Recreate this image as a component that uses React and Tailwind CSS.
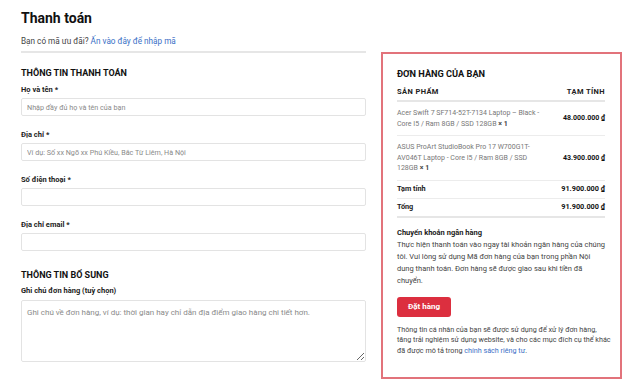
export default function App() {
  const fields = [
    { label: "Họ và tên", placeholder: "Nhập đầy đủ họ và tên của bạn" },
    { label: "Địa chỉ", placeholder: "Ví dụ: Số xx Ngõ xx Phú Kiều, Bắc Từ Liêm, Hà Nội" },
    { label: "Số điện thoại", placeholder: "" },
    { label: "Địa chỉ email", placeholder: "" },
  ];

  return (
    <div
      className="w-[624px] h-[381px] bg-white overflow-hidden flex pl-[21px] pr-[2px]"
      style={{ fontFamily: "Roboto, 'Liberation Sans', sans-serif" }}
    >
      {/* left: billing form */}
      <div className="w-[345px] flex flex-col">
        <h1 className="mt-[9px] text-[14px] leading-[18px] font-bold text-[#111]">Thanh toán</h1>
        <p className="mt-[8px] text-[8.2px] leading-[12px] text-[#444]">
          Bạn có mã ưu đãi? <span className="text-[#3a6fc6]">Ấn vào đây để nhập mã</span>
        </p>
        <div className="mt-[4px] h-[2px] bg-[#e6e6e6]" />

        <h2 className="mt-[14px] text-[9px] leading-[12px] font-bold text-[#111]">THÔNG TIN THANH TOÁN</h2>

        {fields.map((f, i) => (
          <div key={i} className={i === 0 ? "mt-[6px]" : "mt-[14px]"}>
            <label className="block text-[7.5px] leading-[10px] font-bold text-[#222]">{f.label} *</label>
            <input
              className="block mt-[3px] w-full h-[18px] border border-[#e3e3e3] rounded-[2px] px-[5px] text-[7.2px] placeholder:text-[#8a8a8a] outline-none"
              placeholder={f.placeholder}
            />
          </div>
        ))}

        <h2 className="mt-[18px] text-[9px] leading-[12px] font-bold text-[#111]">THÔNG TIN BỔ SUNG</h2>
        <label className="mt-[5px] block text-[7.5px] leading-[10px] font-bold text-[#222]">Ghi chú đơn hàng (tuỳ chọn)</label>
        <textarea
          className="block mt-[4px] w-full h-[62px] border border-[#e3e3e3] rounded-[2px] px-[5px] py-[6px] text-[8px] leading-[11px] placeholder:text-[#8a8a8a] outline-none"
          placeholder="Ghi chú về đơn hàng, ví dụ: thời gian hay chỉ dẫn địa điểm giao hàng chi tiết hơn."
        />
      </div>

      {/* right: order summary */}
      <div className="ml-[15px] mt-[52px] w-[241px] h-[327px] border-2 border-[#e2737b] pl-[14px] pr-[15px] pt-[14px]">
        <h2 className="text-[9.2px] leading-[12px] font-bold text-[#111]">ĐƠN HÀNG CỦA BẠN</h2>
        <div className="mt-[7px] flex justify-between text-[7.5px] leading-[10px] font-bold tracking-[0.4px] text-[#222] pb-[3px] border-b-2 border-[#e6e6e6]">
          <span>SẢN PHẨM</span>
          <span>TẠM TÍNH</span>
        </div>

        <div className="flex items-center justify-between py-[6px] border-b border-[#ececec]">
          <div className="text-[7px] leading-[10.5px] text-[#777] whitespace-nowrap">
            Acer Swift 7 SF714-52T-7134 Laptop – Black -
            <br />
            Core I5 / Ram 8GB / SSD 128GB <span className="font-bold text-[#444]">× 1</span>
          </div>
          <div className="text-[7px] font-bold text-[#111]">48.000.000 ₫</div>
        </div>
        <div className="flex items-center justify-between py-[6px] border-b border-[#ececec]">
          <div className="text-[7px] leading-[10.5px] text-[#777] whitespace-nowrap">
            ASUS ProArt StudioBook Pro 17 W700G1T-
            <br />
            AV046T Laptop - Core I5 / Ram 8GB / SSD
            <br />
            128GB <span className="font-bold text-[#444]">× 1</span>
          </div>
          <div className="text-[7px] font-bold text-[#111]">43.900.000 ₫</div>
        </div>

        <div className="flex justify-between py-[3.5px] text-[7.3px] leading-[10px] font-bold text-[#222] border-b border-[#ececec]">
          <span>Tạm tính</span>
          <span className="text-[#111]">91.900.000 ₫</span>
        </div>
        <div className="flex justify-between py-[3.5px] text-[7.3px] leading-[10px] font-bold text-[#222] border-b-2 border-[#e6e6e6]">
          <span>Tổng</span>
          <span className="text-[#111]">91.900.000 ₫</span>
        </div>

        <div className="mt-[10px] text-[7.5px] leading-[10px] font-bold text-[#222]">Chuyển khoản ngân hàng</div>
        <p className="mt-[1px] text-[7.5px] leading-[12px] text-[#444] whitespace-nowrap">
          Thực hiện thanh toán vào ngay tài khoản ngân hàng của chúng
          <br />
          tôi. Vui lòng sử dụng Mã đơn hàng của bạn trong phần Nội
          <br />
          dung thanh toán. Đơn hàng sẽ được giao sau khi tiền đã
          <br />
          chuyển.
        </p>

        <button className="mt-[10px] w-[54px] h-[20px] rounded-[3px] bg-[#dc2f3f] text-white text-[8px] font-bold">
          Đặt hàng
        </button>

        <p className="mt-[8px] text-[7.2px] leading-[10.5px] text-[#444] whitespace-nowrap">
          Thông tin cá nhân của bạn sẽ được sử dụng để xử lý đơn hàng,
          <br />
          tăng trải nghiệm sử dụng website, và cho các mục đích cụ thể khác
          <br />
          đã được mô tả trong <span className="text-[#3a6fc6]">chính sách riêng tư</span>.
        </p>
      </div>
    </div>
  );
}
